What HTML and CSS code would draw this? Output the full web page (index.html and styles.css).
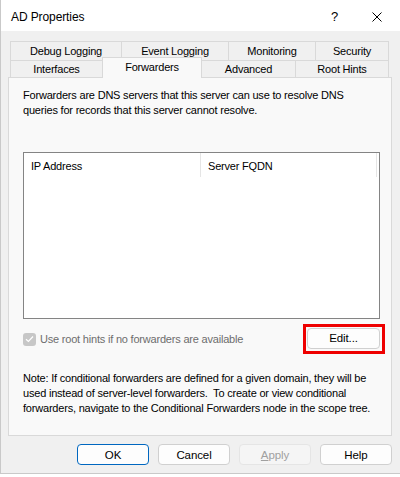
FILE: index.html
```html
<!DOCTYPE html>
<html>
<head>
<meta charset="utf-8">
<link rel="stylesheet" href="styles.css">
</head>
<body>
<div class="dialog">
  <div class="titlebar">
    <span class="title">AD Properties</span>
    <span class="help">?</span>
    <span class="close"><svg width="10" height="10" viewBox="0 0 10 10"><path d="M0.5 0.5 L9.5 9.5 M9.5 0.5 L0.5 9.5" stroke="#000" stroke-width="1" fill="none"/></svg></span>
  </div>
  <div class="body">
    <div class="tabs">
      <div class="tabrow row1">
        <div class="tab w111">Debug Logging</div>
        <div class="tab w107">Event Logging</div>
        <div class="tab w87">Monitoring</div>
        <div class="tab w74 last">Security</div>
      </div>
      <div class="tabrow row2">
        <div class="tab w92">Interfaces</div>
        <div class="tab w100 selected">Forwarders</div>
        <div class="tab w93">Advanced</div>
        <div class="tab w94 last">Root Hints</div>
      </div>
    </div>
    <div class="panel">
      <p class="desc">Forwarders are DNS servers that this server can use to resolve DNS<br>queries for records that this server cannot resolve.</p>
      <div class="listbox">
        <div class="listhead">
          <div class="col col-ip">IP Address</div>
          <div class="col col-fqdn">Server FQDN</div>
        </div>
      </div>
      <div class="optrow">
        <label class="check">
          <span class="box"><svg width="9" height="8" viewBox="0 0 9 8"><path d="M1 4.2 L3.4 6.5 L8 1.5" stroke="#fff" stroke-width="1.2" fill="none"/></svg></span>
          <span class="checklabel">Use root hints if no forwarders are available</span>
        </label>
        <div class="highlight">
          <button class="btn edit">Edit...</button>
        </div>
      </div>
      <p class="note">Note: If conditional forwarders are defined for a given domain, they will be<br>used instead of server-level forwarders.&nbsp; To create or view conditional<br>forwarders, navigate to the Conditional Forwarders node in the scope tree.</p>
    </div>
    <div class="buttons">
      <button class="btn default">OK</button>
      <button class="btn">Cancel</button>
      <button class="btn disabled"><u>A</u>pply</button>
      <button class="btn">Help</button>
    </div>
  </div>
</div>
</body>
</html>
```

FILE: styles.css
```css
* { box-sizing: border-box; }
html, body { margin: 0; padding: 0; background: #ffffff; }
body {
  font-family: "Liberation Sans", Arial, sans-serif;
  font-size: 11px;
  letter-spacing: -0.2px;
  color: #000;
}
.dialog {
  width: 400px;
  height: 474px;
  background: #f0f0f0;
  border-left: 1px solid #c9c9c9;
  border-bottom: 1px solid #c9c9c9;
  display: flex;
  flex-direction: column;
}
.titlebar {
  height: 31px;
  background: #ffffff;
  display: flex;
  align-items: center;
  padding-left: 10px;
}
.title { font-size: 12px; letter-spacing: -0.1px; flex: 1; padding-top: 2px; }
.help { width: 20px; margin-right: 21px; font-size: 13px; text-align: left; padding-top: 2px; }
.close { width: 28px; display: flex; align-items: center; padding-top: 2px; }
.body { padding: 0 0 0 7px; flex: 1; }
.tabs { margin-top: 10px; margin-left: 2px; }
.tabrow { display: flex; align-items: flex-end; }
.row1 { height: 19px; }
.row2 { height: 17px; position: relative; z-index: 2; }
.tab {
  background: #f0f0f0;
  border-top: 1px solid #d9d9d9;
  border-left: 1px solid #d9d9d9;
  text-align: center;
  white-space: nowrap;
}
.tab.last { border-right: 1px solid #d9d9d9; }
.row1 .tab { height: 19px; line-height: 19px; }
.row2 .tab { height: 17px; line-height: 17px; }
.row2 .tab.selected {
  height: 21px;
  line-height: 18px;
  margin-bottom: -1px;
  background: #f9f9f9;
  border-right: 1px solid #d9d9d9;
}
.row2 .tab.selected + .tab { border-left: none; }
.w111 { width: 111px; } .w107 { width: 107px; } .w87 { width: 87px; } .w74 { width: 74px; }
.w92 { width: 92px; } .w100 { width: 100px; } .w93 { width: 93px; } .w94 { width: 94px; }
.panel {
  width: 384px;
  height: 359px;
  background: #f9f9f9;
  border: 1px solid #d9d9d9;
  padding: 10px 0 0 14px;
  position: relative;
  z-index: 1;
}
.desc, .note { margin: 0; line-height: 15px; }
.listbox {
  margin-top: 34px;
  width: 357px;
  height: 167px;
  background: #fff;
  border: 1px solid #848484;
}
.listhead { display: flex; height: 24px; }
.col { line-height: 24px; padding-left: 7px; padding-top: 1px; border-right: 1px solid #e5e5e5; }
.col-ip { width: 177px; }
.col-fqdn { width: 176px; padding-left: 7px; }
.optrow {
  margin-top: 4px;
  width: 362px;
  height: 31px;
  display: flex;
  align-items: center;
  justify-content: space-between;
}
.check { display: flex; align-items: center; padding-top: 1px; }
.box {
  width: 13px; height: 13px;
  border-radius: 3px;
  background: #c7c7c7;
  display: flex; align-items: center; justify-content: center;
  margin-right: 4px;
}
.checklabel { color: #6d6d6d; }
.highlight {
  border: 3px solid #ee0000;
  padding: 1px 2px 2px 1px;
  display: flex;
}
.btn {
  font-family: "Liberation Sans", Arial, sans-serif;
  font-size: 11.5px;
  letter-spacing: -0.1px;
  width: 72px;
  height: 21px;
  background: #fdfdfd;
  border: 1px solid #d0d0d0;
  border-radius: 4px;
  color: #000;
  padding: 0;
}
.edit { width: 73px; }
.note { margin-top: 17px; }
.buttons {
  display: flex;
  gap: 9px;
  margin-top: 8px;
  margin-left: 69px;
}
.btn.default { border-color: #0067c0; }
.btn.disabled { background: #f5f5f5; border-color: #e5e5e5; color: #a0a0a0; }
.btn u { text-decoration: underline; }
```
